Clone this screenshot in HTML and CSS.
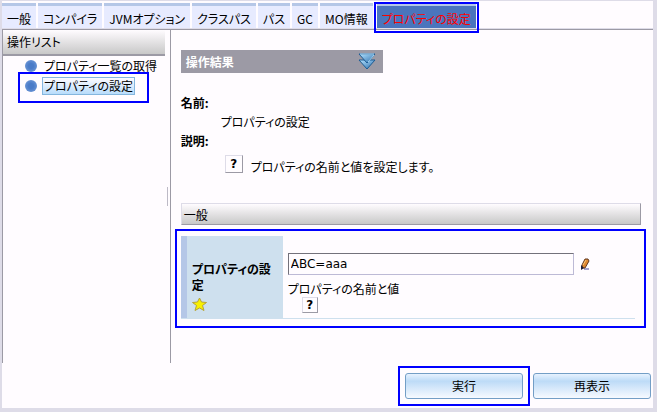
FILE: index.html
```
<!DOCTYPE html>
<html lang="ja">
<head>
  <meta charset="UTF-8">
  <meta name="viewport" content="width=device-width, initial-scale=1.0">
  <title>プロパティの設定</title>
  <link rel="stylesheet" href="styles.css">
</head>
<body>
  <nav class="tabs">
    <a class="tab" href="#general">一般</a>
    <a class="tab" href="#compiler">コンパイラ</a>
    <a class="tab" href="#jvm">JVMオプション</a>
    <a class="tab" href="#classpath">クラスパス</a>
    <a class="tab" href="#path">パス</a>
    <a class="tab" href="#gc">GC</a>
    <a class="tab" href="#mo">MO情報</a>
    <a class="tab active marked" href="#property">プロパティの設定</a>
  </nav>

  <div class="content">
    <aside class="sidebar">
      <h2 class="sidebar-title">操作リスト</h2>
      <ul class="operations">
        <li class="operation"><a href="#list">プロパティ一覧の取得</a></li>
        <li class="operation marked"><a class="selected" href="#set">プロパティの設定</a></li>
      </ul>
    </aside>
    <div class="splitter"></div>

    <main class="main">
      <div class="result">
        <span>操作結果</span>
        <svg class="result-icon" width="18" height="17" viewBox="0 0 18 17">
          <defs>
            <linearGradient id="arrow" x1="0" y1="0" x2="1" y2="1">
              <stop offset="0" stop-color="#b5e3ff"/>
              <stop offset="1" stop-color="#2a6cab"/>
            </linearGradient>
          </defs>
          <path d="M1 7h16l-8 9z" fill="url(#arrow)" stroke="#1c5c94"/>
          <path d="M1 1h16L9 10z" fill="url(#arrow)" stroke="#1c5c94"/>
          <path d="M2 1h14M10 9l6-7" fill="none" stroke="#a5d7f7"/>
        </svg>
      </div>

      <dl class="info">
        <dt>名前:</dt>
        <dd>プロパティの設定</dd>
        <dt>説明:</dt>
        <dd class="description">
          <button class="help help-large" type="button">?</button>
          <span>プロパティの名前と値を設定します。</span>
        </dd>
      </dl>

      <h2 class="section-title">一般</h2>

      <div class="field-box marked">
        <div class="field">
          <div class="field-label">
            <label for="property">プロパティの設定</label>
            <svg class="star" width="15" height="14" viewBox="0 0 15 14">
              <path d="M7.500 1l2 4 5 .5-4 3 1.500 5-4.500-2.500-4.500 2.500 1.500-5-4-3 5-.5z" fill="#f8f000" stroke="#b5a238"/>
            </svg>
          </div>
          <div class="field-body">
            <div class="field-row">
              <input class="field-input" id="property" type="text" value="ABC=aaa">
              <svg class="pencil" width="9" height="12" viewBox="0 0 9 12">
                <path d="M3 11h5" stroke="#a5a3cf" stroke-width="2"/>
                <path d="M4 1h3l1 2-4 7H1V7z" fill="#de872f" stroke="#613820"/>
                <path d="M0 7l3 3-3 2z" fill="#1c1c38"/>
                <path d="M5 2L2 7" stroke="#f7c276"/>
              </svg>
            </div>
            <div>プロパティの名前と値</div>
            <button class="help" type="button">?</button>
          </div>
        </div>
      </div>
    </main>
  </div>

  <footer class="footer">
    <button class="btn marked" type="button">実行</button>
    <button class="btn" type="button">再表示</button>
  </footer>
</body>
</html>
```
FILE: styles.css
```
* {
  box-sizing: border-box;
}
body {
  margin: 0;
  min-height: 100vh;
  display: flex;
  flex-direction: column;
  border: 1px solid #dedce8;
  border-width: 1px 4px 4px 2px;
  background-color: #fffcff;
  color: #000;
  font-family: "Noto Sans CJK JP", sans-serif;
  font-size: 12px;
  line-height: 16px;
  font-feature-settings: "palt";
}
a {
  color: inherit;
  text-decoration: none;
}
h2, dl, dd, ul {
  margin: 0;
  padding: 0;
  font-size: 12px;
  font-weight: normal;
}
button, input {
  font: inherit;
  font-feature-settings: inherit;
  color: inherit;
}

/* blue frame over the highlighted parts */
.marked {
  position: relative;
}
.marked::after {
  content: "";
  position: absolute;
  inset: 0;
  border: 2px solid #0000ff;
  pointer-events: none;
}

/* tabs */
.tabs {
  display: flex;
  gap: 2px;
  height: 29px;
  padding-top: 2px;
  border-bottom: 1px solid #9c9aa5;
  box-shadow: inset 0 -1px #dedce8;
}
.tab {
  height: 25px;
  padding: 5px 5px 0;
  border-top: 3px solid #b5c7e7;
  background-color: #e7ebff;
  white-space: nowrap;
}
.tab.active {
  margin-left: 2px;
  background-color: #4a75bd;
  color: #ff0000;
}
.tab.active::after {
  inset: -4px -3px -5px;
}

/* columns */
.content {
  flex: 1;
  display: flex;
}
.sidebar {
  width: 25%;
  border-left: 1px solid #9c9aa5;
}
.sidebar-title {
  height: 26px;
  padding: 4px;
  border-bottom: 2px solid #9c9aa5;
  background: linear-gradient(#fffcff, #c8c8c8);
}
.operations {
  list-style: none;
}
.operation {
  display: flex;
  align-items: center;
  gap: 7px;
  height: 20px;
  padding-left: 22px;
  white-space: nowrap;
}
.operation::before {
  content: "";
  flex: none;
  width: 12px;
  height: 12px;
  border-radius: 50%;
  background: radial-gradient(#4a7bc8 30%, #7ba2dc);
}
.operation.marked::after {
  inset: -4px 16px -7px 15px;
}
.selected {
  padding: 0 1px;
  margin-left: -2px;
  border: 1px solid #84b6de;
  background: linear-gradient(#fffcff, #b8dcfb);
}
.splitter {
  align-self: center;
  width: 1px;
  height: 19px;
  margin: 0 2px;
  background-color: #bdbac6;
}
.main {
  flex: 1;
  padding: 20px 7px 0 4px;
  border-left: 1px solid #9c9aa5;
}
.result {
  display: flex;
  align-items: center;
  justify-content: space-between;
  width: 202px;
  height: 23px;
  margin-left: 6px;
  padding: 0 7px 0 5px;
  background-color: #9c9aa5;
  color: #fff;
  font-weight: bold;
}
.info {
  margin: 22px 6px 0;
}
.info dt {
  height: 19px;
  font-weight: bold;
}
.info dd {
  height: 19px;
  padding-left: 40px;
}
.info .description {
  display: flex;
  align-items: center;
  gap: 8px;
  height: 24px;
  padding-left: 44px;
}
.description span {
  padding-top: 6px;
}
.help {
  display: block;
  width: 16px;
  height: 16px;
  padding: 0;
  border: 1px solid;
  border-color: #dedce8 #9c9aa5 #9c9aa5 #dedce8;
  background-color: #fffcff;
  font-family: "DejaVu Sans", sans-serif;
  font-weight: bold;
  line-height: 13px;
}
.help-large {
  width: 18px;
  height: 18px;
  line-height: 14px;
}
.section-title {
  height: 22px;
  margin: 27px 5px 0 6px;
  padding: 3px 2px;
  border: 1px solid;
  border-color: #dedce8 #9c9aa5 #9c9aa5 #dedce8;
  background: linear-gradient(#fffcff, #c8c8c8);
}

/* property field */
.field-box {
  margin-top: 4px;
  padding: 7px 11px 9px 6px;
}
.field {
  display: flex;
  border-bottom: 1px solid #cee0ee;
}
.field-label {
  flex: none;
  width: 102px;
  padding: 25px 6px 6px 5px;
  border-left: 6px solid #b5c7e7;
  background-color: #cee0ee;
  font-weight: bold;
}
.star {
  display: block;
  margin-top: 4px;
}
.field-body {
  flex: 1;
  padding: 17px 0 5px 5px;
}
.field-row {
  display: flex;
  align-items: center;
  gap: 7px;
  margin-bottom: 6px;
}
.field-input {
  flex: 1;
  max-width: 286px;
  height: 22px;
  padding: 0 2px;
  border: 1px solid;
  border-color: #73717b #bdbad6 #bdbad6 #73717b;
  background-color: #fffcff;
  font-family: "DejaVu Sans", sans-serif;
}
.field-body .help {
  margin-left: 14px;
}

/* buttons */
.footer {
  display: flex;
  justify-content: flex-end;
  gap: 10px;
  padding: 10px 2px 9px;
}
.btn {
  width: 118px;
  height: 26px;
  padding: 0;
  border: 1px solid #739ec6;
  border-radius: 3px;
  background: linear-gradient(#e7f2ff, #bddbf7 30%, #f7faff);
}
.btn.marked::after {
  inset: -8px;
}
```
